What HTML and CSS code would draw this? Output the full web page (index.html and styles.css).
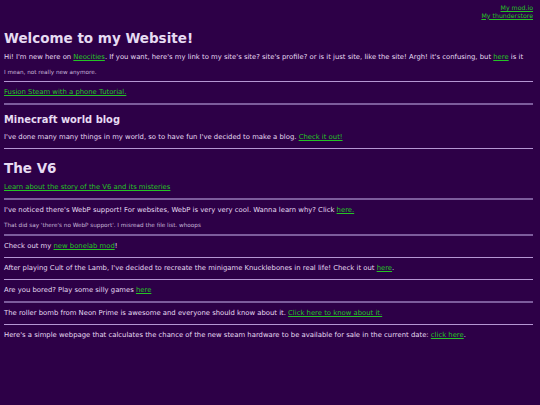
FILE: index.html
```html
<!DOCTYPE html>
<html lang="en">
<head>
    <meta charset="UTF-8">
    <title>Welcome to my Website!</title>
    <link rel="stylesheet" href="styles.css">
</head>
<body>
    <div class="corner-links">
        <a href="#">My mod.io</a><br>
        <a href="#">My thunderstore</a>
    </div>

    <h1>Welcome to my Website!</h1>
    <p>Hi! I'm new here on <a href="#">Neocities</a>. If you want, here's my link to my site's site? site's profile? or is it just site, like the site! Argh! it's confusing, but <a href="#">here</a> is it</p>
    <p class="note">I mean, not really new anymore.</p>
    <hr>
    <p><a href="#">Fusion Steam with a phone Tutorial.</a></p>
    <hr class="dark">

    <h2>Minecraft world blog</h2>
    <p>I've done many many things in my world, so to have fun I've decided to make a blog. <a href="#">Check it out!</a></p>
    <hr>

    <h1>The V6</h1>
    <p><a href="#">Learn about the story of the V6 and its misteries</a></p>
    <hr class="dark">

    <p>I've noticed there's WebP support! For websites, WebP is very very cool. Wanna learn why? Click <a href="#">here.</a></p>
    <p class="note">That did say 'there's no WebP support'. I misread the file list. whoops</p>
    <hr class="dark">
    <p>Check out my <a href="#">new bonelab mod</a>!</p>
    <hr>
    <p>After playing Cult of the Lamb, I've decided to recreate the minigame Knucklebones in real life! Check it out <a href="#">here</a>.</p>
    <hr>
    <p>Are you bored? Play some silly games <a href="#">here</a></p>
    <hr class="dark">
    <p>The roller bomb from Neon Prime is awesome and everyone should know about it. <a href="#">Click here to know about it.</a></p>
    <hr>
    <p>Here's a simple webpage that calculates the chance of the new steam hardware to be available for sale in the current date: <a href="#">click here</a>.</p>
</body>
</html>
```

FILE: styles.css
```css
body {
    font-family: "DejaVu Sans", Verdana, sans-serif;
    font-size: 6.85px;
    line-height: 11px;
    background-color: #2d0047;
    color: #e6dbf2;
    margin: 0;
    padding: 4px 7px 4px 4px;
}
a {
    color: #25c425;
}
.corner-links {
    text-align: right;
    font-size: 6.25px;
    line-height: 7.5px;
}
h1 {
    font-size: 13.5px;
    line-height: 18px;
    margin: 10px 0 4px;
}
h2 {
    font-family: "DejaVu Sans Condensed", "DejaVu Sans", sans-serif;
    font-stretch: condensed;
    font-size: 11px;
    line-height: 14px;
    margin: 8px 0 2px;
}
p {
    margin: 5px 0;
}
.note {
    font-size: 5.7px;
    line-height: 8px;
    color: #c7b6d8;
    margin-top: 0;
}
hr {
    border: none;
    border-top: 1px solid #b596d3;
    height: 0;
    margin: 0;
}
hr.dark {
    border-top: 2px solid #7c5c9c;
}
```
